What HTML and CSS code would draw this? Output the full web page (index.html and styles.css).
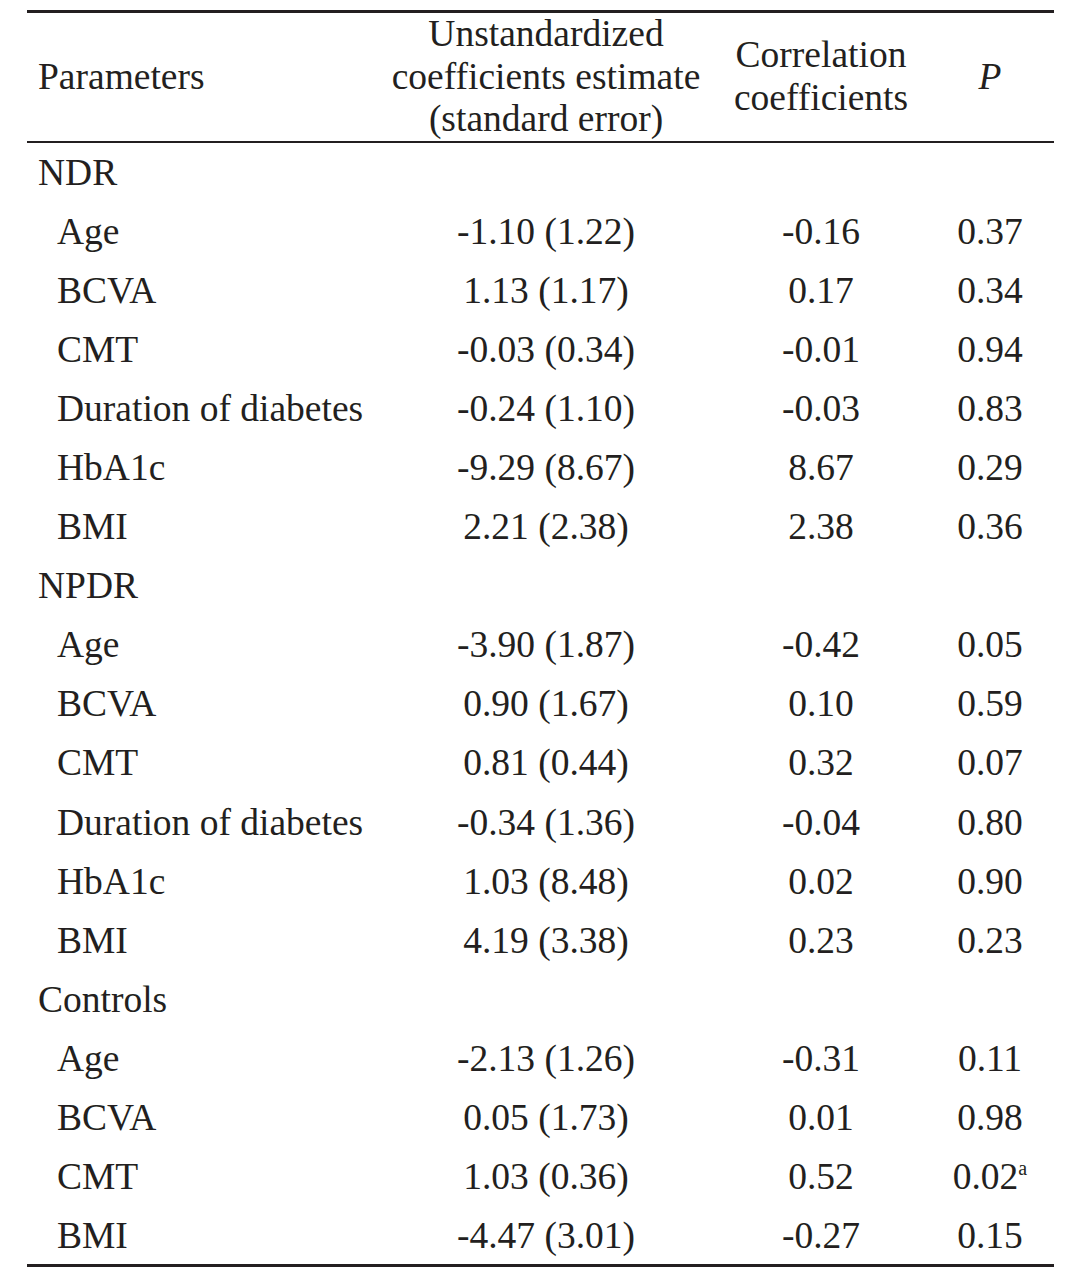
FILE: index.html
```html
<!DOCTYPE html>
<html>
<head>
<meta charset="utf-8">
<link rel="stylesheet" href="styles.css">
</head>
<body>
<table class="tbl">
  <colgroup>
    <col class="c1"><col class="c2"><col class="c3"><col class="c4">
  </colgroup>
  <thead>
    <tr>
      <th class="left">Parameters</th>
      <th>Unstandardized<br>coefficients estimate<br>(standard error)</th>
      <th>Correlation<br>coefficients</th>
      <th><i>P</i></th>
    </tr>
  </thead>
  <tbody>
    <tr><td class="group">NDR</td><td></td><td></td><td></td></tr>
    <tr><td class="sub">Age</td><td>-1.10 (1.22)</td><td>-0.16</td><td>0.37</td></tr>
    <tr><td class="sub">BCVA</td><td>1.13 (1.17)</td><td>0.17</td><td>0.34</td></tr>
    <tr><td class="sub">CMT</td><td>-0.03 (0.34)</td><td>-0.01</td><td>0.94</td></tr>
    <tr><td class="sub">Duration of diabetes</td><td>-0.24 (1.10)</td><td>-0.03</td><td>0.83</td></tr>
    <tr><td class="sub">HbA1c</td><td>-9.29 (8.67)</td><td>8.67</td><td>0.29</td></tr>
    <tr><td class="sub">BMI</td><td>2.21 (2.38)</td><td>2.38</td><td>0.36</td></tr>
    <tr><td class="group">NPDR</td><td></td><td></td><td></td></tr>
    <tr><td class="sub">Age</td><td>-3.90 (1.87)</td><td>-0.42</td><td>0.05</td></tr>
    <tr><td class="sub">BCVA</td><td>0.90 (1.67)</td><td>0.10</td><td>0.59</td></tr>
    <tr><td class="sub">CMT</td><td>0.81 (0.44)</td><td>0.32</td><td>0.07</td></tr>
    <tr><td class="sub">Duration of diabetes</td><td>-0.34 (1.36)</td><td>-0.04</td><td>0.80</td></tr>
    <tr><td class="sub">HbA1c</td><td>1.03 (8.48)</td><td>0.02</td><td>0.90</td></tr>
    <tr><td class="sub">BMI</td><td>4.19 (3.38)</td><td>0.23</td><td>0.23</td></tr>
    <tr><td class="group">Controls</td><td></td><td></td><td></td></tr>
    <tr><td class="sub">Age</td><td>-2.13 (1.26)</td><td>-0.31</td><td>0.11</td></tr>
    <tr><td class="sub">BCVA</td><td>0.05 (1.73)</td><td>0.01</td><td>0.98</td></tr>
    <tr><td class="sub">CMT</td><td>1.03 (0.36)</td><td>0.52</td><td>0.02<sup class="note">a</sup></td></tr>
    <tr><td class="sub">BMI</td><td>-4.47 (3.01)</td><td>-0.27</td><td>0.15</td></tr>
  </tbody>
</table>
</body>
</html>
```
FILE: styles.css
```css
html, body {
  margin: 0;
  padding: 0;
  background: #ffffff;
}
body {
  padding: 10px 0 0 27px;
  font-family: "Liberation Serif", "Times New Roman", serif;
  color: #231f20;
}
.tbl {
  width: 1027px;
  border-collapse: collapse;
  table-layout: fixed;
  font-size: 37.5px;
  border-top: 3px solid #231f20;
  border-bottom: 3px solid #231f20;
}
.c1 { width: 349px; }
.c2 { width: 340px; }
.c3 { width: 210px; }
.c4 { width: 128px; }
.tbl th {
  font-weight: normal;
  text-align: center;
  vertical-align: middle;
  padding: 0;
  line-height: 42.5px;
  border-bottom: 2px solid #231f20;
}
.tbl th.left {
  text-align: left;
  padding-left: 11px;
}
.tbl td {
  padding: 2px 0 0;
  height: 57.05px;
  line-height: 40px;
  text-align: center;
  vertical-align: middle;
}
.tbl td.group {
  text-align: left;
  padding-left: 11px;
}
.tbl td.sub {
  text-align: left;
  padding-left: 30px;
}
.note {
  font-size: 20px;
  line-height: 0;
  vertical-align: 14px;
}
```
